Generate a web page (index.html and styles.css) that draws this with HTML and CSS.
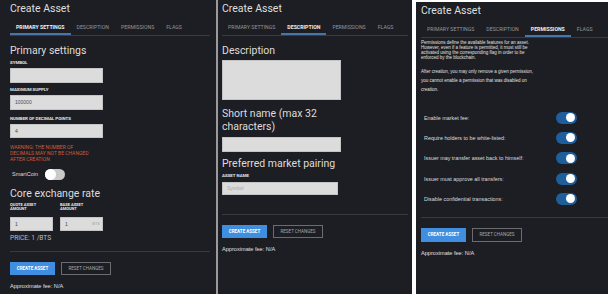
FILE: index.html
```html
<!DOCTYPE html>
<html lang="en">
<head>
  <meta charset="UTF-8" />
  <meta name="viewport" content="width=device-width, initial-scale=1.0"/>
  <title>Create Asset</title>
  <link rel="stylesheet" href="styles.css">
</head>
<body>
  <div class="shots">

    <!-- primary settings tab -->
    <section class="panel panel-primary">
      <h1 class="title">Create Asset</h1>
      <div class="tabs">
        <span class="tab active">Primary settings</span>
        <span class="tab">Description</span>
        <span class="tab">Permissions</span>
        <span class="tab">Flags</span>
      </div>

      <h2 class="heading first">Primary settings</h2>
      <div class="label l-symbol">Symbol</div>
      <div class="field w93"></div>
      <div class="label l-supply">Maximum supply</div>
      <div class="field w93">100000</div>
      <div class="label l-decimal">Number of decimal points</div>
      <div class="field w93 short">4</div>
      <div class="warning">Warning: the number of<br>decimals may not be changed<br>after creation</div>

      <div class="smart">
        <span class="smart-label">SmartCoin</span>
        <span class="toggle off"></span>
      </div>

      <h2 class="heading core">Core exchange rate</h2>
      <div class="rate">
        <div class="rate-col">
          <div class="label two">Quote asset<br>amount</div>
          <div class="field w43">1</div>
        </div>
        <div class="rate-col">
          <div class="label two">Base asset<br>amount</div>
          <div class="field w43">1<span class="suffix">BTS</span></div>
        </div>
      </div>
      <div class="price">PRICE: 1 /BTS</div>

      <hr class="rule r1">
      <div class="actions">
        <span class="btn primary">Create asset</span>
        <span class="btn ghost">Reset changes</span>
      </div>
      <div class="fee">Approximate fee: N/A</div>
    </section>

    <!-- description tab -->
    <section class="panel panel-desc">
      <h1 class="title">Create Asset</h1>
      <div class="tabs">
        <span class="tab">Primary settings</span>
        <span class="tab active">Description</span>
        <span class="tab">Permissions</span>
        <span class="tab">Flags</span>
      </div>

      <h2 class="heading first">Description</h2>
      <div class="area"></div>
      <h2 class="heading wrap">Short name (max 32 characters)</h2>
      <div class="field w119 tall"></div>
      <h2 class="heading pairing">Preferred market pairing</h2>
      <div class="label l-asset">Asset name</div>
      <div class="field w116 placeholder">Symbol</div>

      <hr class="rule r2">
      <div class="actions">
        <span class="btn primary">Create asset</span>
        <span class="btn ghost">Reset changes</span>
      </div>
      <div class="fee">Approximate fee: N/A</div>
    </section>

    <!-- permissions tab -->
    <section class="panel panel-perm">
      <h1 class="title">Create Asset</h1>
      <div class="tabs">
        <span class="tab">Primary settings</span>
        <span class="tab">Description</span>
        <span class="tab active">Permissions</span>
        <span class="tab">Flags</span>
      </div>

      <p class="intro">Permissions define the available features for an asset.<br>However, even if a feature is permitted, it must still be<br>activated using the corresponding flag in order to be<br>enforced by the blockchain.</p>
      <p class="note">After creation, you may only remove a given permission,<br>you cannot enable a permission that was disabled on<br>creation.</p>

      <div class="perms">
        <div class="perm"><span>Enable market fee:</span><span class="toggle on"></span></div>
        <div class="perm"><span>Require holders to be white-listed:</span><span class="toggle on"></span></div>
        <div class="perm"><span>Issuer may transfer asset back to himself:</span><span class="toggle on"></span></div>
        <div class="perm"><span>Issuer must approve all transfers:</span><span class="toggle on"></span></div>
        <div class="perm"><span>Disable confidential transactions:</span><span class="toggle on"></span></div>
      </div>

      <hr class="rule r3">
      <div class="actions">
        <span class="btn primary">Create asset</span>
        <span class="btn ghost">Reset changes</span>
      </div>
      <div class="fee">Approximate fee: N/A</div>
    </section>

  </div>
</body>
</html>
```

FILE: styles.css
```css
body {
  margin: 0;
  background: #fff;
  font-family: Roboto, "Liberation Sans", sans-serif;
  color: #d9d9d9;
}
.shots {
  display: flex;
  height: 294px;
  overflow: hidden;
}
.panel {
  background: #1d1e23;
  box-sizing: border-box;
  padding-top: 3px;
  display: flex;
  flex-direction: column;
  align-items: flex-start;
}
.panel-primary {
  width: 218px;
  padding-left: 10px;
  padding-right: 6px;
  border-right: 2px solid #9a9a9a;
}
.panel-desc {
  width: 194px;
  padding-left: 4px;
  padding-right: 4px;
}
.panel-perm {
  width: 192px;
  margin-left: 4px;
  margin-top: 2px;
  padding-left: 5px;
}

.title {
  margin: 0;
  font-size: 10.5px;
  line-height: 12px;
  font-weight: 400;
  color: #dedede;
}
.tabs {
  display: flex;
  align-self: stretch;
  border-bottom: 1px solid #3a3b41;
}
.tab {
  padding: 8px 6px 2px;
  line-height: 8px;
  font-size: 5.2px;
  text-transform: uppercase;
  color: #959597;
  border-bottom: 2px solid transparent;
  white-space: nowrap;
}
.tab.active {
  color: #f0f0f0;
  font-weight: 700;
  border-bottom-color: #4775a8;
}

.heading {
  margin: 0;
  font-size: 10.5px;
  line-height: 12px;
  font-weight: 400;
  color: #dcdcdc;
}
.heading.first { margin-top: 9px; }
.heading.core { margin-top: 8px; }
.heading.wrap { margin-top: 7px; width: 120px; line-height: 13px; }
.heading.pairing { margin-top: 6px; }

.label {
  font-size: 4.4px;
  line-height: 6px;
  font-weight: 700;
  text-transform: uppercase;
  color: #e6e6e6;
}
.l-symbol { margin-top: 3px; }
.l-supply { margin-top: 4px; }
.l-decimal { margin-top: 6px; }
.l-asset { margin-top: 3px; }
.label.two {
  line-height: 3.8px;
  font-size: 4px;
}

.field {
  box-sizing: border-box;
  position: relative;
  height: 15px;
  margin-top: 2px;
  padding-left: 4px;
  background: #dcdcdc;
  border: 1px solid #c4c4c4;
  font-family: "Liberation Sans", sans-serif;
  font-size: 5px;
  line-height: 13px;
  color: #4a4a4a;
}
.field.short { height: 14px; line-height: 12px; }
.field.tall { margin-top: 4px; }
.field.placeholder { height: 13px; line-height: 11px; margin-top: 3px; color: #a9a9a9; }
.w93 { width: 93px; }
.w43 { width: 43px; }
.w119 { width: 119px; }
.w116 { width: 116px; }
.suffix {
  position: absolute;
  right: 2px;
  top: 0;
  color: #a0a0a0;
  font-size: 4px;
}

.area {
  box-sizing: border-box;
  width: 119px;
  height: 40px;
  margin-top: 3px;
  background: #dcdcdc;
  border: 1px solid #c4c4c4;
}

.warning {
  margin-top: 6px;
  font-size: 5px;
  line-height: 6px;
  text-transform: uppercase;
  color: #c95b3c;
}

.smart {
  display: flex;
  align-items: center;
  gap: 7px;
  margin-top: 6px;
  height: 12px;
  padding-left: 2px;
}
.smart-label {
  font-family: "Liberation Sans", sans-serif;
  font-size: 5.5px;
  color: #dcdcdc;
}

.toggle {
  position: relative;
  display: inline-block;
  width: 20px;
  height: 11px;
  border-radius: 6px;
}
.toggle::after {
  content: "";
  position: absolute;
  top: 1px;
  width: 9px;
  height: 9px;
  border-radius: 50%;
  background: #fff;
}
.toggle.off { background: #c9c9c9; }
.toggle.off::after { left: 0; top: 0; width: 11px; height: 11px; }
.toggle.on { background: #1e5e9c; width: 21px; height: 12px; }
.toggle.on::after { right: 2px; top: 1.5px; }

.rate {
  display: flex;
  gap: 7px;
  margin-top: 3px;
}
.rate .field { margin-top: 6px; height: 14px; line-height: 12px; }
.price {
  margin-top: 3px;
  font-size: 6.6px;
  line-height: 8px;
  color: #bdbdbd;
}

.rule {
  align-self: stretch;
  height: 0;
  margin: 0;
  border: 0;
  border-top: 1px solid #393a40;
}
.r1 { margin-top: 9px; }
.r2 { margin-top: 19px; }
.r3 { margin-top: 8px; }

.actions {
  display: flex;
  gap: 6px;
  margin-top: 10px;
}
.btn {
  box-sizing: border-box;
  height: 13px;
  line-height: 11px;
  font-size: 4.5px;
  text-transform: uppercase;
  text-align: center;
  border: 1px solid transparent;
}
.btn.primary {
  width: 45px;
  background: #3f8ee0;
  border-color: #3f8ee0;
  color: #fff;
  font-weight: 700;
}
.btn.ghost {
  width: 50px;
  border-color: #6b6c70;
  color: #a8a8a8;
}
.panel-perm .btn { height: 14px; line-height: 12px; }

.fee {
  margin-top: 7px;
  font-family: "Liberation Sans", sans-serif;
  font-size: 5.6px;
  line-height: 8px;
  color: #e0e0e0;
}

.intro, .note {
  margin: 0;
  font-family: "Liberation Sans", sans-serif;
  font-size: 4.5px;
  color: #e0e0e0;
  white-space: nowrap;
}
.intro { margin-top: 3px; line-height: 4.9px; }
.note { margin-top: 6px; line-height: 9.3px; }

.perms {
  align-self: stretch;
  margin-top: 13px;
}
.perm {
  display: flex;
  align-items: center;
  justify-content: space-between;
  height: 20.3px;
  width: 153px;
  padding-left: 3px;
  font-family: "Liberation Sans", sans-serif;
  font-size: 5.4px;
  color: #dcdcdc;
}
```
